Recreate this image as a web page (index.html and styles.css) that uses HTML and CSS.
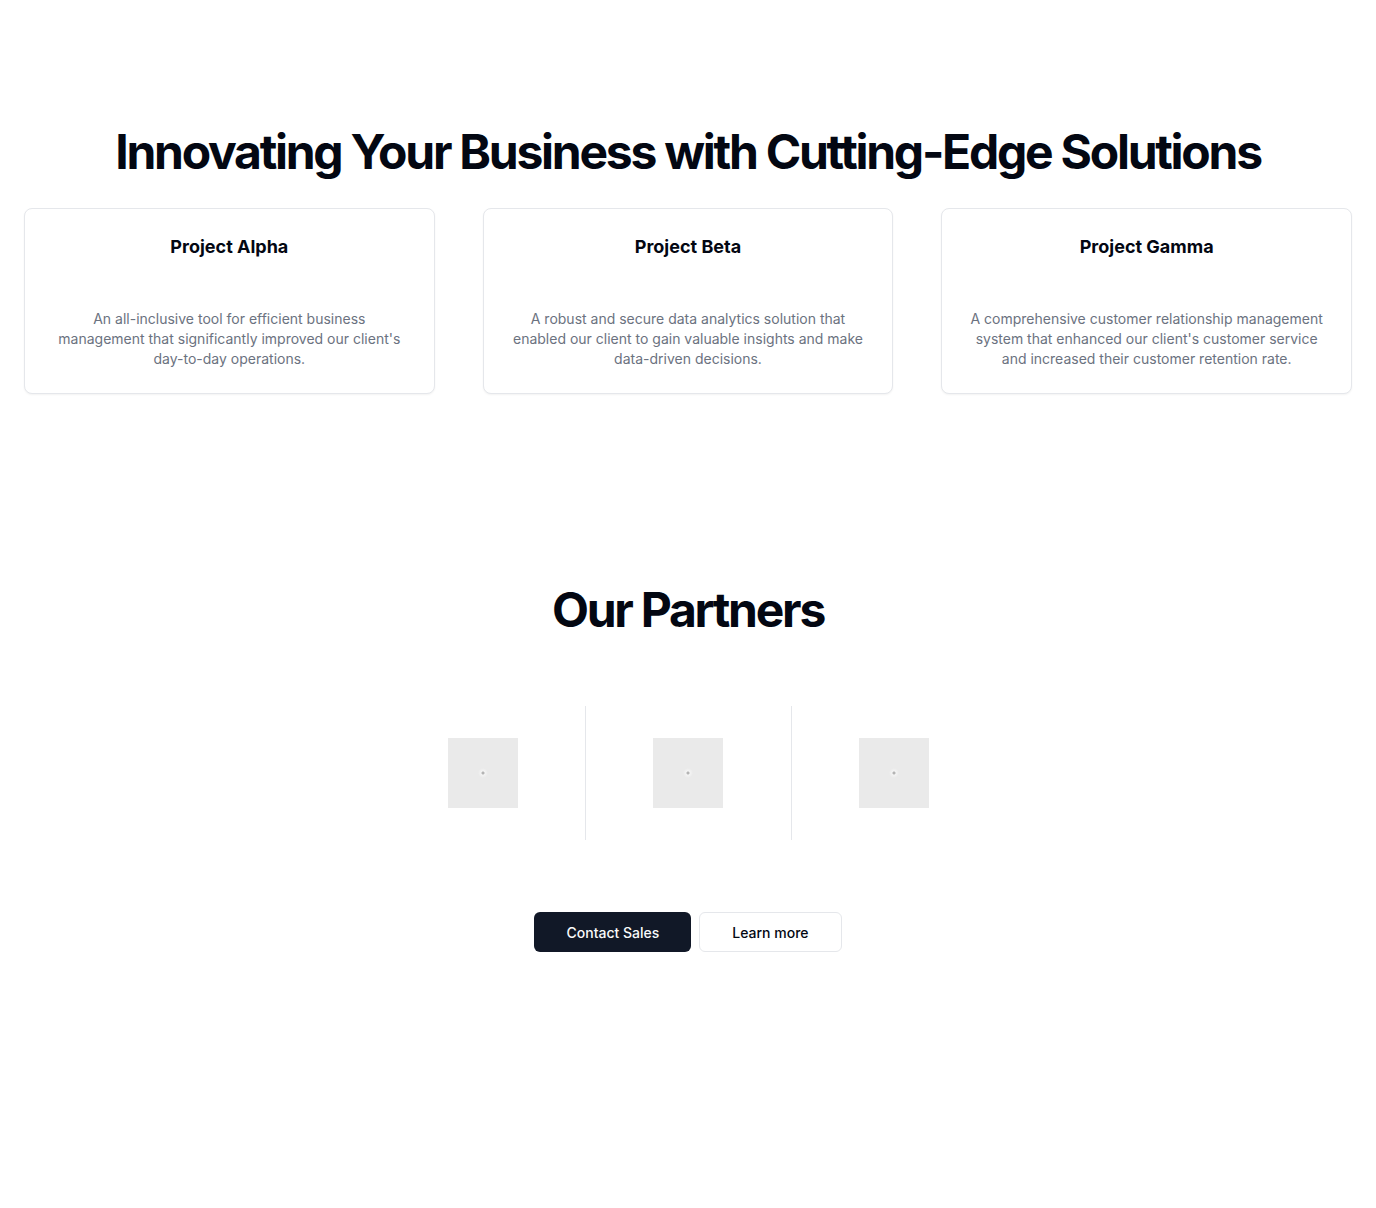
FILE: index.html
```html
<!DOCTYPE html>
<html lang="en">
<head>
<meta charset="utf-8">
<title>Solutions</title>
<link rel="stylesheet" href="styles.css">
</head>
<body>
<main class="page">
  <section class="projects">
    <h1 class="title">Innovating Your Business with Cutting-Edge Solutions</h1>
    <div class="cards">
      <div class="card">
        <h3 class="card-title">Project Alpha</h3>
        <p class="card-text">An all-inclusive tool for efficient business management that significantly improved our client's day-to-day operations.</p>
      </div>
      <div class="card">
        <h3 class="card-title">Project Beta</h3>
        <p class="card-text">A robust and secure data analytics solution that enabled our client to gain valuable insights and make data-driven decisions.</p>
      </div>
      <div class="card">
        <h3 class="card-title">Project Gamma</h3>
        <p class="card-text">A comprehensive customer relationship management system that enhanced our client's customer service and increased their customer retention rate.</p>
      </div>
    </div>
  </section>
  <section class="partners">
    <h2 class="title">Our Partners</h2>
    <div class="logos">
      <div class="logo-cell"><div class="logo"><span class="dot"></span></div></div>
      <div class="logo-cell"><div class="logo"><span class="dot"></span></div></div>
      <div class="logo-cell"><div class="logo"><span class="dot"></span></div></div>
    </div>
    <div class="actions">
      <a class="btn btn-dark" href="#">Contact Sales</a>
      <a class="btn btn-light" href="#">Learn more</a>
    </div>
  </section>
</main>
</body>
</html>
```

FILE: styles.css
```css
* { box-sizing: border-box; }
html, body { margin: 0; padding: 0; background: #fff; }
body {
  font-family: Inter, "Noto Sans", "Liberation Sans", sans-serif;
  color: #030712;
  min-height: 1208px;
}
.page { padding: 128px 24px 0; }
.title {
  margin: 0;
  font-size: 48px;
  line-height: 48px;
  font-weight: 700;
  letter-spacing: -0.047em;
  text-align: center;
  color: #030712;
}
.cards {
  margin-top: 32px;
  display: grid;
  grid-template-columns: repeat(3, 1fr);
  gap: 48px;
}
.card {
  border: 1px solid #e5e7eb;
  border-radius: 8px;
  box-shadow: 0 1px 2px rgba(0,0,0,0.05);
  padding: 24px 24px 24px;
  text-align: center;
  background: #fff;
}
.card-title {
  margin: 0;
  font-size: 18px;
  line-height: 28px;
  font-weight: 650;
  color: #030712;
}
.card-text {
  margin: 48px 0 0;
  font-size: 14px;
  line-height: 20px;
  color: #6b7280;
}
.partners { padding-top: 192px; }
.logos {
  margin: 72px auto 0;
  width: 616px;
  display: grid;
  grid-template-columns: repeat(3, 1fr);
}
.logo-cell {
  display: flex;
  justify-content: center;
  padding: 32px 0;
}
.logo-cell + .logo-cell { border-left: 1px solid #e5e7eb; }
.logo {
  width: 70px;
  height: 70px;
  background: #eaeaea;
  display: flex;
  align-items: center;
  justify-content: center;
}
.dot {
  width: 10px;
  height: 10px;
  border-radius: 50%;
  background: radial-gradient(circle, #b4b4b4 0 1px, #f4f4f4 2px, #eaeaea 5px);
}
.actions {
  margin-top: 72px;
  display: flex;
  justify-content: center;
  gap: 8px;
}
.btn {
  display: inline-flex;
  align-items: center;
  justify-content: center;
  height: 40px;
  padding: 0 32px;
  border-radius: 6px;
  font-size: 14px;
  font-weight: 500;
  text-decoration: none;
}
.btn-dark { background: #111827; color: #f9fafb; }
.btn-light { background: #fff; color: #030712; border: 1px solid #e5e7eb; }
```
